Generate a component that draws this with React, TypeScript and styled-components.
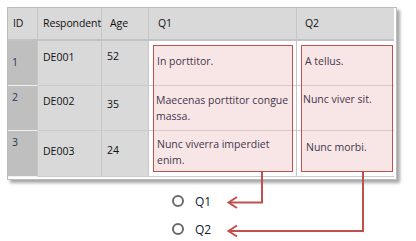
import React from "react";
import styled, { createGlobalStyle } from "styled-components";

const GlobalStyle = createGlobalStyle`
  html, body {
    margin: 0;
    padding: 0;
    background: #ffffff;
  }
  body {
    font-family: "Open Sans", "Noto Sans", sans-serif;
  }
`;

const Page = styled.div`
  position: relative;
  width: 416px;
  height: 241px;
  overflow: hidden;
`;

const TableFrame = styled.div`
  position: relative;
  margin: 7px 0 0 7px;
  width: 386px;
  border: 1px solid #bcbcbc;
  background: #ffffff;
  padding: 0 2px 2px 0;
  box-shadow: 3px 3px 3px rgba(0, 0, 0, 0.35);
`;

const Grid = styled.div`
  display: grid;
  grid-template-columns: 30px 64px 47px 148px 97px;
  grid-template-rows: 33px 45px 45px 46px;
`;

const HeadCell = styled.div<{ $indent?: number; $last?: boolean }>`
  background: #d9d9d9;
  border-right: ${(p) => (p.$last ? "none" : "1px solid #c6c6c6")};
  border-bottom: 2px solid #c3c3c3;
  font-size: 10.5px;
  letter-spacing: -0.1px;
  color: #111111;
  padding-left: ${(p) => p.$indent ?? 5}px;
  display: flex;
  align-items: center;
  padding-bottom: 2px;
  white-space: nowrap;
`;

const Cell = styled.div<{ $kind: "id" | "plain" | "answer"; $top: number; $last?: boolean }>`
  background: ${(p) =>
    p.$kind === "id" ? "#bfbfbf" : p.$kind === "plain" ? "#d9d9d9" : "#ffffff"};
  border-right: ${(p) => (p.$last ? "none" : "1px solid #c6c6c6")};
  border-bottom: 1px solid ${(p) => (p.$kind === "id" ? "#f0f0f0" : "#cbcbcb")};
  font-size: 10.5px;
  color: ${(p) => (p.$kind === "id" ? "#1f3a60" : "#111111")};
  padding: ${(p) => p.$top}px 0 0 ${(p) => (p.$kind === "id" ? 4 : 5)}px;
  line-height: 15px;
`;

const AnswerBox = styled.div<{ $left: number; $width: number }>`
  position: absolute;
  top: 37px;
  left: ${(p) => p.$left}px;
  width: ${(p) => p.$width}px;
  height: 125px;
  border: 1px solid #c0504d;
  background: rgba(240, 200, 200, 0.45);
  display: grid;
  grid-template-rows: 42px 46px 37px;
`;

const AnswerText = styled.div<{ $top: number; $indent: number }>`
  font-size: 10.5px;
  line-height: 15.5px;
  color: #43364d;
  padding: ${(p) => p.$top}px 2px 0 ${(p) => p.$indent}px;
`;

const Choices = styled.div`
  display: flex;
  flex-direction: column;
  gap: 12px;
  margin: 13px 0 0 172px;
`;

const Choice = styled.label`
  display: flex;
  align-items: center;
  gap: 11px;
  font-size: 12px;
  color: #101830;
  height: 16px;
`;

const Radio = styled.span`
  width: 8px;
  height: 8px;
  border: 2px solid #6b6b6b;
  border-radius: 50%;
  background: #ffffff;
`;

const Wires = styled.svg`
  position: absolute;
  left: 0;
  top: 0;
  pointer-events: none;
`;

const rows = [
  { id: "1", resp: "DE001", age: "52", tops: [14, 9, 8] },
  { id: "2", resp: "DE002", age: "35", tops: [4, 8, 11] },
  { id: "3", resp: "DE003", age: "24", tops: [4, 13, 12] },
];

const q1 = [
  { text: "In porttitor.", top: 8, indent: 3 },
  { text: "Maecenas porttitor congue massa.", top: 5, indent: 2 },
  { text: "Nunc viverra imperdiet enim.", top: 3, indent: 3 },
];

const q2 = [
  { text: "A tellus.", top: 8, indent: 3 },
  { text: "Nunc viver sit.", top: 4, indent: 1 },
  { text: "Nunc morbi.", top: 6, indent: 4 },
];

export default function App() {
  return (
    <Page>
      <GlobalStyle />
      <TableFrame>
        <Grid>
          <HeadCell>ID</HeadCell>
          <HeadCell>Respondent</HeadCell>
          <HeadCell $indent={8}>Age</HeadCell>
          <HeadCell $indent={9}>Q1</HeadCell>
          <HeadCell $indent={8} $last>Q2</HeadCell>
          {rows.map((r) => (
            <React.Fragment key={r.id}>
              <Cell $kind="id" $top={r.tops[0]}>{r.id}</Cell>
              <Cell $kind="plain" $top={r.tops[1]}>{r.resp}</Cell>
              <Cell $kind="plain" $top={r.tops[2]}>{r.age}</Cell>
              <Cell $kind="answer" $top={0} />
              <Cell $kind="answer" $top={0} $last />
            </React.Fragment>
          ))}
        </Grid>
        <AnswerBox $left={145} $width={138}>
          {q1.map((a) => (
            <AnswerText key={a.text} $top={a.top} $indent={a.indent}>{a.text}</AnswerText>
          ))}
        </AnswerBox>
        <AnswerBox $left={293} $width={90}>
          {q2.map((a) => (
            <AnswerText key={a.text} $top={a.top} $indent={a.indent}>{a.text}</AnswerText>
          ))}
        </AnswerBox>
      </TableFrame>
      <Choices>
        <Choice><Radio />Q1</Choice>
        <Choice><Radio />Q2</Choice>
      </Choices>
      <Wires width="416" height="241" viewBox="0 0 416 241">
        <g fill="none" stroke="#c0504d" strokeWidth="2">
          <path d="M262 172 V202.5 H229" />
          <path d="M237 197 L228.5 202.5 L237 208" />
          <path d="M363 172 V231 H229" />
          <path d="M237 225.5 L228.5 231 L237 236.5" />
        </g>
      </Wires>
    </Page>
  );
}
